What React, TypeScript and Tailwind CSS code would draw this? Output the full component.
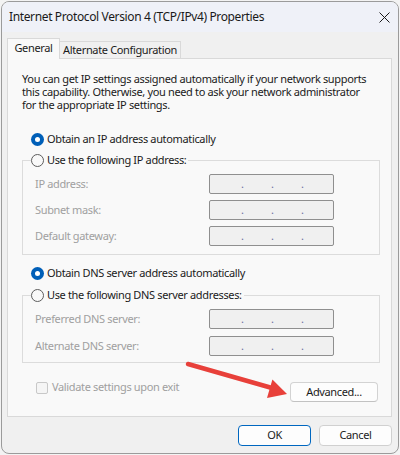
import React from "react";

function Radio({ checked }: { checked: boolean }) {
  return checked ? (
    <span className="w-[13px] h-[13px] rounded-full bg-[#005fb8] flex items-center justify-center shrink-0">
      <span className="w-[5px] h-[5px] rounded-full bg-white" />
    </span>
  ) : (
    <span className="w-[13px] h-[13px] rounded-full border border-[#5d5d5d] bg-[#f9f9f9] shrink-0" />
  );
}

function IpBox() {
  return (
    <div className="w-[125px] h-[20px] border border-[#8f8f8f] rounded-[2px] bg-[#f0f0f0] flex items-center pl-[31px] text-[#6d6d9f] leading-[18px]">
      <span className="w-[30px]">.</span>
      <span className="w-[30px]">.</span>
      <span className="w-[30px]">.</span>
    </div>
  );
}

function Row({ label }: { label: string }) {
  return (
    <div className="flex items-center h-[20px] ml-[12px]">
      <span className="w-[174px] text-[#a0a0a0]">{label}</span>
      <IpBox />
    </div>
  );
}

export default function App() {
  return (
    <div className="w-[400px] h-[455px] bg-[#f3f3f3] p-[1px] font-['Noto_Sans',sans-serif] text-[11px] tracking-[-0.35px] text-[#1b1b1b] relative">
      <div className="h-[453px] w-[398px] border border-[#9b9b9b] rounded-[8px] bg-[#f0f0f0] overflow-hidden flex flex-col">
        {/* Title bar */}
        <div className="h-[30px] bg-[#eff1f8] flex items-center justify-between pl-[7px] pr-[8px] shrink-0">
          <span className="text-[12px] text-[#1a1a1a] tracking-[-0.37px] whitespace-nowrap">
            Internet Protocol Version 4 (TCP/IPv4) Properties
          </span>
          <svg width="11" height="11" viewBox="0 0 11 11">
            <path d="M0.5 0.5 L10.5 10.5 M10.5 0.5 L0.5 10.5" stroke="#1a1a1a" strokeWidth="1" fill="none" />
          </svg>
        </div>

        {/* Tabs */}
        <div className="flex items-end ml-[5px] mt-[6px] relative z-10">
          <div className="w-[53px] h-[21px] border border-b-0 border-[#d9d9d9] bg-[#f9f9f9] flex items-center justify-center pb-[1px] whitespace-nowrap">
            General
          </div>
          <div className="w-[121px] h-[17px] border-t border-r border-[#d9d9d9] bg-[#f0f0f0] flex items-center justify-center mb-[1px] whitespace-nowrap">
            Alternate Configuration
          </div>
        </div>

        {/* Panel */}
        <div className="ml-[5px] w-[385px] h-[359px] -mt-[1px] border border-[#d9d9d9] bg-[#f9f9f9] pl-[14px] pr-[11px] pt-[13px] flex flex-col shrink-0">
          <div className="flex flex-col whitespace-nowrap">
            <div className="h-[13px] leading-[13px]">You can get IP settings assigned automatically if your network supports</div>
            <div className="h-[13px] leading-[13px]">this capability. Otherwise, you need to ask your network administrator</div>
            <div className="h-[13px] leading-[13px]">for the appropriate IP settings.</div>
          </div>

          <label className="flex items-center gap-[3px] h-[16px] ml-[9px] mt-[20px]">
            <Radio checked />
            <span>Obtain an IP address automatically</span>
          </label>

          <fieldset className="border border-[#dcdcdc] mt-[5px] pt-[6px] pb-[8px] flex flex-col gap-[6px]">
            <legend className="ml-[8px] pr-[2px]">
              <span className="flex items-center gap-[3px] h-[16px]">
                <Radio checked={false} />
                <span>Use the following IP address:</span>
              </span>
            </legend>
            <Row label="IP address:" />
            <Row label="Subnet mask:" />
            <Row label="Default gateway:" />
          </fieldset>

          <label className="flex items-center gap-[3px] h-[16px] ml-[9px] mt-[10px]">
            <Radio checked />
            <span>Obtain DNS server address automatically</span>
          </label>

          <fieldset className="border border-[#dcdcdc] mt-[6px] pt-[6px] pb-[6px] flex flex-col gap-[7px]">
            <legend className="ml-[8px] pr-[2px]">
              <span className="flex items-center gap-[3px] h-[16px]">
                <Radio checked={false} />
                <span>Use the following DNS server addresses:</span>
              </span>
            </legend>
            <Row label="Preferred DNS server:" />
            <Row label="Alternate DNS server:" />
          </fieldset>

          <div className="flex items-start justify-between mt-[19px] h-[20px]">
            <label className="flex items-center gap-[4px] ml-[14px] -mt-[1px] h-[13px] text-[#a0a0a0]">
              <span className="w-[12px] h-[12px] border border-[#c8c8c8] rounded-[2px] bg-[#f5f5f5]" />
              <span>Validate settings upon exit</span>
            </label>
            <button className="w-[88px] h-[20px] mr-[2px] border border-[#d3d3d3] border-b-[#c2c2c2] rounded-[4px] bg-[#fdfdfd] text-[#1b1b1b] flex items-center justify-center">
              Advanced...
            </button>
          </div>
        </div>

        {/* Buttons */}
        <div className="flex justify-end gap-[8px] pr-[6px] mt-[8px]">
          <button className="w-[73px] h-[21px] border border-[#0067c0] rounded-[4px] bg-[#fdfdfd] text-[#1b1b1b] flex items-center justify-center">
            OK
          </button>
          <button className="w-[73px] h-[21px] border border-[#d0d0d0] rounded-[4px] bg-[#fdfdfd] text-[#1b1b1b] flex items-center justify-center">
            Cancel
          </button>
        </div>
      </div>

      {/* Red annotation arrow */}
      <svg className="absolute left-0 top-0 pointer-events-none" width="400" height="455">
        <line x1="188" y1="364" x2="272" y2="388" stroke="#e8403a" strokeWidth="4.5" strokeLinecap="round" />
        <polygon points="287,394 272.4,379.5 267,398" fill="#e8403a" />
      </svg>
    </div>
  );
}
